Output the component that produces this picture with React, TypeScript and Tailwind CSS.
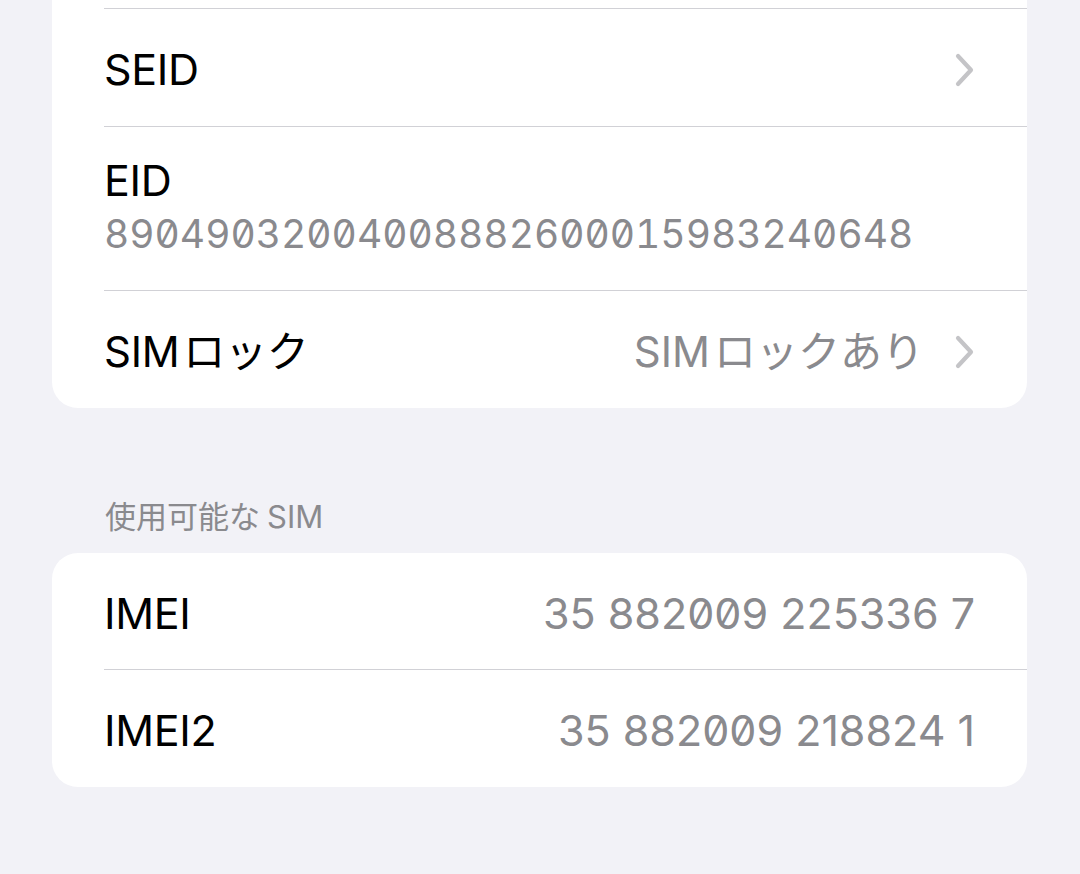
import React from 'react';

const sans = "font-['Inter','Noto_Sans_CJK_JP',sans-serif]";
const digits = "font-['Inter',sans-serif] [font-feature-settings:'zero'_1,'tnum'_1]";
const imeiDigits = "font-['Inter',sans-serif] [font-feature-settings:'zero'_1]";

const Chevron = () => (
  <svg width="20" height="34" viewBox="0 0 20 34" className="shrink-0 ml-[31px]">
    <path d="M3 3 L16 17 L3 31" fill="none" stroke="#c4c4c7" strokeWidth="4.2" strokeLinecap="round" strokeLinejoin="round" />
  </svg>
);

// "SIM" followed by a little gap before the kana, as iOS spaces mixed scripts
const SimText: React.FC<{ rest: string }> = ({ rest }) => (
  <>
    SIM<span className="ml-[4px]">{rest}</span>
  </>
);

const Row: React.FC<{
  label: React.ReactNode;
  value?: React.ReactNode;
  chevron?: boolean;
  height?: string;
  border?: boolean;
  labelClass?: string;
  valueClass?: string;
}> = ({ label, value, chevron, height = 'h-[118px]', border = true, labelClass = 'text-[43px]', valueClass = 'text-[42px]' }) => (
  <div className="pl-[52px]">
    <div className={`${height} flex items-center justify-between pr-[52px] pt-[4px] ${border ? 'border-t border-[#d1d1d6]' : ''}`}>
      <span className={`${labelClass} text-black tracking-[-0.3px] whitespace-nowrap`}>{label}</span>
      <div className="flex items-center">
        {value && <span className={`${valueClass} text-[#8a8a8e] whitespace-nowrap`}>{value}</span>}
        {chevron && <Chevron />}
      </div>
    </div>
  </div>
);

export default function App() {
  return (
    <div className={`${sans} min-h-[874px] bg-[#f2f2f7] px-[52px] w-[1080px] overflow-hidden`}>
      <div className="bg-white rounded-b-[26px] w-[975px]">
        <div className="h-[8px]" />
        <Row label="SEID" chevron />
        <div className="pl-[52px]">
          <div className="h-[164px] border-t border-[#d1d1d6] flex flex-col justify-center pt-[0px]">
            <span className="text-[43px] text-black leading-[50px] tracking-[-0.3px]">EID</span>
            <span className={`${digits} text-[39px] text-[#8a8a8e] leading-[58px]`}>89049032004008882600015983240648</span>
          </div>
        </div>
        <Row label={<SimText rest="ロック" />} value={<SimText rest="ロックあり" />} labelClass="text-[42px]" chevron />
      </div>

      <div className="pt-[90px] pb-[18px] pl-[53px] text-[31px] text-[#8a8a8e] leading-[37px] whitespace-nowrap">
        使用可能な<span className="ml-[7px]">SIM</span>
      </div>

      <div className="bg-white rounded-[26px] w-[975px] overflow-hidden">
        <Row label="IMEI" value="35 882009 225336 7" height="h-[116px]" border={false} valueClass={`${imeiDigits} text-[43px]`} />
        <Row label="IMEI2" value="35 882009 218824 1" valueClass={`${imeiDigits} text-[43px]`} />
      </div>
    </div>
  );
}
